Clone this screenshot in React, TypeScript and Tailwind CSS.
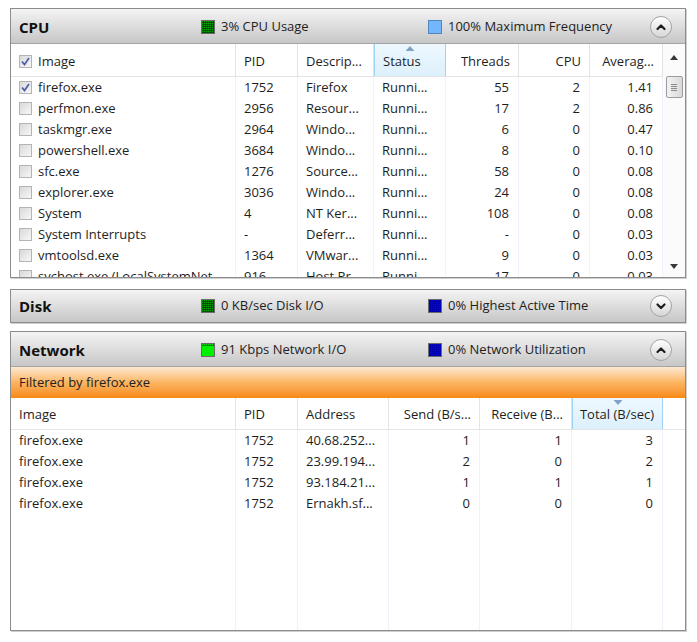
import type { ReactNode } from 'react'

type Col = {
  label: string
  w: string
  right?: boolean
  sort?: 'up' | 'down'
}

const CPU_COLS: Col[] = [
  { label: 'Image', w: 'w-[225px]' },
  { label: 'PID', w: 'w-[62px]' },
  { label: 'Descrip...', w: 'w-[76px]' },
  { label: 'Status', w: 'w-[72px]', sort: 'up' },
  { label: 'Threads', w: 'w-[73px]', right: true },
  { label: 'CPU', w: 'w-[71px]', right: true },
  { label: 'Averag...', w: 'w-[73px]', right: true },
]

const CPU_ROWS = [
  ['firefox.exe', '1752', 'Firefox', 'Runni...', '55', '2', '1.41'],
  ['perfmon.exe', '2956', 'Resour...', 'Runni...', '17', '2', '0.86'],
  ['taskmgr.exe', '2964', 'Windo...', 'Runni...', '6', '0', '0.47'],
  ['powershell.exe', '3684', 'Windo...', 'Runni...', '8', '0', '0.10'],
  ['sfc.exe', '1276', 'Source...', 'Runni...', '58', '0', '0.08'],
  ['explorer.exe', '3036', 'Windo...', 'Runni...', '24', '0', '0.08'],
  ['System', '4', 'NT Ker...', 'Runni...', '108', '0', '0.08'],
  ['System Interrupts', '-', 'Deferr...', 'Runni...', '-', '0', '0.03'],
  ['vmtoolsd.exe', '1364', 'VMwar...', 'Runni...', '9', '0', '0.03'],
  ['svchost.exe (LocalSystemNet...', '916', 'Host Pr...', 'Runni...', '17', '0', '0.03'],
]

const NET_COLS: Col[] = [
  { label: 'Image', w: 'w-[225px]' },
  { label: 'PID', w: 'w-[62px]' },
  { label: 'Address', w: 'w-[91px]' },
  { label: 'Send (B/s...', w: 'w-[91px]', right: true },
  { label: 'Receive (B...', w: 'w-[92px]', right: true },
  { label: 'Total (B/sec)', w: 'w-[91px]', right: true, sort: 'down' },
]

const NET_ROWS = [
  ['firefox.exe', '1752', '40.68.252...', '1', '1', '3'],
  ['firefox.exe', '1752', '23.99.194...', '2', '0', '2'],
  ['firefox.exe', '1752', '93.184.21...', '1', '1', '1'],
  ['firefox.exe', '1752', 'Ernakh.sf...', '0', '0', '0'],
]

function Meter({ fill, line, band }: { fill: string; line: string; band?: boolean }) {
  const ticks = [2, 4, 6, 8, 10, 12]
  return (
    <svg width="14" height="14" viewBox="0 0 14 14" className="shrink-0">
      <rect x="0.5" y="0.5" width="13" height="13" fill={fill} stroke="#6b6b6b" />
      {ticks.map(t => (
        <g key={t} stroke={line} strokeWidth="0.7">
          <line x1={t + 0.5} y1="1" x2={t + 0.5} y2={band ? 3 : 13} />
          {(!band || t < 3) && <line x1="1" y1={t + 0.5} x2="13" y2={t + 0.5} />}
        </g>
      ))}
    </svg>
  )
}

function PlainMeter() {
  return (
    <svg width="14" height="14" viewBox="0 0 14 14" className="shrink-0">
      <rect x="0.5" y="0.5" width="13" height="13" fill="#74b6fb" stroke="#4f86c0" />
    </svg>
  )
}

function Chevron({ open }: { open: boolean }) {
  return (
    <div className="flex h-[22px] w-[22px] items-center justify-center rounded-full border border-[#a3a3a3] bg-gradient-to-b from-white to-[#d6d6d6] shadow-[inset_0_1px_0_#fff]">
      <svg width="12" height="12" viewBox="0 0 12 12">
        <path
          d={open ? 'M2.5 8 L6 4.5 L9.5 8' : 'M2.5 4.5 L6 8 L9.5 4.5'}
          fill="none"
          stroke="#1c1c1c"
          strokeWidth="2.2"
          strokeLinecap="round"
          strokeLinejoin="round"
        />
      </svg>
    </div>
  )
}

function Check({ on }: { on?: boolean }) {
  return (
    <span className="flex h-[13px] w-[13px] shrink-0 items-center justify-center border border-[#b4b4b4] bg-gradient-to-br from-[#d9d9d9] to-[#f7f7f7]">
      {on && (
        <svg width="9" height="9" viewBox="0 0 9 9">
          <path d="M1 4.5 L3.5 7.5 L8 1" fill="none" stroke="#4b5fa6" strokeWidth="1.7" />
        </svg>
      )}
    </span>
  )
}

function PanelHeader({
  title,
  m1,
  t1,
  m2,
  t2,
  open,
}: {
  title: string
  m1: ReactNode
  t1: string
  m2: ReactNode
  t2: string
  open: boolean
}) {
  return (
    <div
      className={
        'flex shrink-0 items-center bg-gradient-to-b from-[#f4f4f4] to-[#c7c7c7] pl-2 pr-[13px] ' +
        (open ? 'box-content h-[32px] border-b border-[#a4a4a4] pt-[2px]' : 'h-[32px]')
      }
    >
      <div className="w-[182px] text-[15px] font-bold text-[#111]">{title}</div>
      <div className="flex w-[227px] items-center gap-[6px]">
        {m1}
        <span>{t1}</span>
      </div>
      <div className="flex flex-1 items-center gap-[6px]">
        {m2}
        <span>{t2}</span>
      </div>
      <Chevron open={open} />
    </div>
  )
}

function SortArrow({ dir }: { dir: 'up' | 'down' }) {
  return (
    <svg width="9" height="5" viewBox="0 0 9 5" className="absolute left-1/2 top-[2px] -translate-x-1/2">
      <path d={dir === 'up' ? 'M0 5 L4.5 0 L9 5 Z' : 'M0 0 L4.5 5 L9 0 Z'} fill="#7fa3c6" />
    </svg>
  )
}

function HeaderRow({ cols, h, check }: { cols: Col[]; h: string; check?: boolean }) {
  return (
    <div className={'flex border-b border-[#e5e5e5] ' + h}>
      {cols.map((c, i) => (
        <div
          key={c.label}
          className={
            'relative flex shrink-0 items-center px-2 pt-[3px] ' +
            c.w +
            (c.right ? ' justify-end' : '') +
            (c.sort
              ? ' border-x border-[#9fd3f3] bg-gradient-to-b from-[#eef8fe] to-[#dcf0fc]'
              : ' border-r border-[#e3e3e3]')
          }
        >
          {c.sort && <SortArrow dir={c.sort} />}
          {i === 0 && check && (
            <span className="mr-[6px]">
              <Check on />
            </span>
          )}
          <span className="whitespace-nowrap">{c.label}</span>
        </div>
      ))}
    </div>
  )
}

function Body({ cols, rows, h, check }: { cols: Col[]; rows: string[][]; h: string; check?: boolean }) {
  return (
    <div className={'flex overflow-hidden ' + h}>
      {cols.map((c, ci) => (
        <div key={c.label} className={'shrink-0 border-r border-[#edf3fb] ' + c.w}>
          {rows.map((r, ri) => (
            <div
              key={ri}
              className={
                'flex h-[21px] items-center overflow-hidden whitespace-nowrap px-2' +
                (c.right ? ' justify-end pr-[9px]' : '')
              }
            >
              {ci === 0 && check && (
                <span className="mr-[6px]">
                  <Check on={ri === 0} />
                </span>
              )}
              {r[ci]}
            </div>
          ))}
        </div>
      ))}
    </div>
  )
}

function ScrollBar() {
  return (
    <div className="flex w-[22px] shrink-0 flex-col items-center bg-[#fbfbfb]">
      <svg width="8" height="5" viewBox="0 0 8 5" className="mt-[11px]">
        <path d="M0 5 L4 0 L8 5 Z" fill="#3a3a3a" />
      </svg>
      <div className="mt-[16px] flex h-[22px] w-[17px] items-center justify-center rounded-[2px] border border-[#9c9c9c] bg-gradient-to-r from-[#f3f3f3] to-[#dadada]">
        <div className="flex flex-col gap-[1px]">
          <div className="h-px w-[6px] bg-[#8a8a8a]" />
          <div className="h-px w-[6px] bg-[#8a8a8a]" />
          <div className="h-px w-[6px] bg-[#8a8a8a]" />
          <div className="h-px w-[6px] bg-[#8a8a8a]" />
        </div>
      </div>
      <div className="flex-1" />
      <svg width="8" height="5" viewBox="0 0 8 5" className="mb-[8px]">
        <path d="M0 0 L4 5 L8 0 Z" fill="#3a3a3a" />
      </svg>
    </div>
  )
}

export default function App() {
  return (
    <div className="min-h-screen bg-white px-[10px] pt-2 font-['Open_Sans',sans-serif] text-[13px] text-[#1e1e1e]">
      {/* CPU */}
      <div className="w-[676px] border border-[#8c8c8c] shadow-[1px_1px_0_#cfcfcf]">
        <PanelHeader
          title="CPU"
          m1={<Meter fill="#00a800" line="#003800" />}
          t1="3% CPU Usage"
          m2={<PlainMeter />}
          t2="100% Maximum Frequency"
          open
        />
        <div className="flex">
          <div className="flex flex-col">
            <HeaderRow cols={CPU_COLS} h="h-[33px]" check />
            <Body cols={CPU_COLS} rows={CPU_ROWS} h="h-[200px]" check />
          </div>
          <ScrollBar />
        </div>
      </div>

      {/* Disk */}
      <div className="mt-[11px] w-[676px] border border-[#8c8c8c] shadow-[1px_1px_0_#cfcfcf]">
        <PanelHeader
          title="Disk"
          m1={<Meter fill="#00a800" line="#003800" />}
          t1="0 KB/sec Disk I/O"
          m2={<Meter fill="#0000ff" line="#0000a0" />}
          t2="0% Highest Active Time"
          open={false}
        />
      </div>

      {/* Network */}
      <div className="mt-[8px] w-[676px] border border-[#8c8c8c] shadow-[1px_1px_0_#cfcfcf]">
        <PanelHeader
          title="Network"
          m1={<Meter fill="#00f000" line="#006000" band />}
          t1="91 Kbps Network I/O"
          m2={<Meter fill="#0000ff" line="#0000a0" />}
          t2="0% Network Utilization"
          open
        />
        <div className="flex h-[31px] items-center bg-gradient-to-b from-[#fde8d0] via-[#fbb560] to-[#f7890c] pl-2 pt-[1px] text-[#222]">
          Filtered by firefox.exe
        </div>
        <HeaderRow cols={NET_COLS} h="h-[32px]" />
        <Body cols={NET_COLS} rows={NET_ROWS} h="h-[200px]" />
      </div>
    </div>
  )
}
